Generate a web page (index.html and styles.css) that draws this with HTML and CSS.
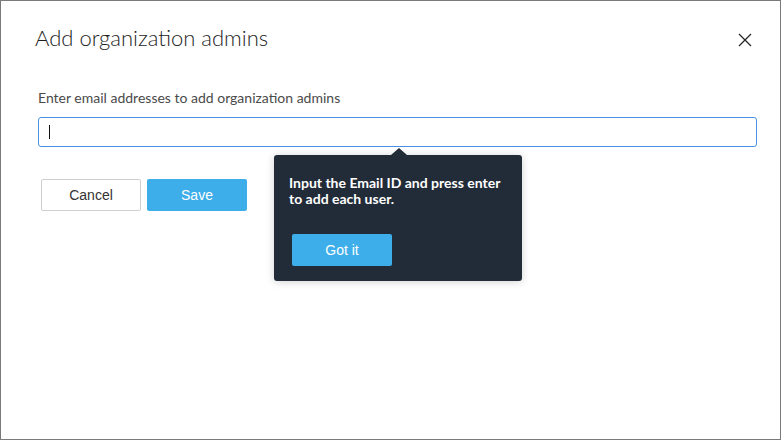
FILE: index.html
```html
<!DOCTYPE html>
<html>
<head>
<meta charset="utf-8">
<link rel="stylesheet" href="styles.css">
</head>
<body>
<div class="frame">
  <div class="header">
    <h1 class="title">Add organization admins</h1>
    <button class="close" aria-label="Close">
      <svg width="14" height="14" viewBox="0 0 14 14"><path d="M1 1 L13 13 M13 1 L1 13" stroke="#222" stroke-width="1.2" fill="none"/></svg>
    </button>
  </div>
  <div class="content">
    <label class="label">Enter email addresses to add organization admins</label>
    <div class="field-wrap">
      <div class="input"><span class="caret"></span></div>
      <div class="tooltip">
        <p class="tip-text">Input the Email ID and press enter to add each user.</p>
        <button class="btn primary tip-btn">Got it</button>
      </div>
    </div>
    <div class="actions">
      <button class="btn secondary">Cancel</button>
      <button class="btn primary">Save</button>
    </div>
  </div>
</div>
</body>
</html>
```
FILE: styles.css
```css
* { box-sizing: border-box; }
html, body { margin: 0; padding: 0; background: #fff; }
.frame {
  width: 781px;
  height: 440px;
  border: 1px solid #7a7a7a;
  font-family: Lato, "Liberation Sans", sans-serif;
}
.header {
  display: flex;
  justify-content: space-between;
  align-items: flex-start;
  padding: 23px 28px 0 34px;
}
.title {
  margin: 0;
  font-size: 22px;
  line-height: 28px;
  font-weight: 300;
  color: #1e1e1e;
}
.close {
  border: 0;
  background: none;
  padding: 0;
  margin-top: 9px;
  width: 14px;
  height: 14px;
  display: block;
}
.close svg { display: block; }
.content {
  padding: 37px 23px 0 37px;
}
.label {
  display: block;
  font-size: 14px;
  line-height: 17px;
  color: #4a4a4a;
}
.field-wrap {
  position: relative;
  margin-top: 11px;
}
.input {
  height: 30px;
  border: 1px solid #4a90e2;
  border-radius: 3px;
  display: flex;
  align-items: center;
  padding-left: 10px;
}
.caret {
  width: 1px;
  height: 14px;
  background: #111;
}
.tooltip {
  position: absolute;
  left: 236px;
  top: 38px;
  width: 248px;
  height: 126px;
  background: #222b38;
  border-radius: 3px;
  box-shadow: 0 1px 8px rgba(0,0,0,0.18);
  padding: 20px 15px 15px 15px;
}
.tooltip::before {
  content: "";
  position: absolute;
  left: 117px;
  top: -7px;
  border-left: 8px solid transparent;
  border-right: 8px solid transparent;
  border-bottom: 7px solid #222b38;
}
.tip-text {
  margin: 0;
  font-size: 14px;
  line-height: 16px;
  font-weight: 700;
  color: #fff;
}
.tip-btn {
  display: block;
  margin: 27px 0 0 3px;
}
.actions {
  display: flex;
  gap: 6px;
  margin-top: 32px;
  padding-left: 3px;
}
.btn {
  width: 100px;
  height: 32px;
  border-radius: 2px;
  font-family: "Liberation Sans", Arial, sans-serif;
  font-size: 14px;
  padding: 0;
  cursor: pointer;
}
.secondary {
  background: #fff;
  border: 1px solid #cfcfcf;
  color: #333;
}
.primary {
  background: #3daee9;
  border: 0;
  color: #fff;
}
```
